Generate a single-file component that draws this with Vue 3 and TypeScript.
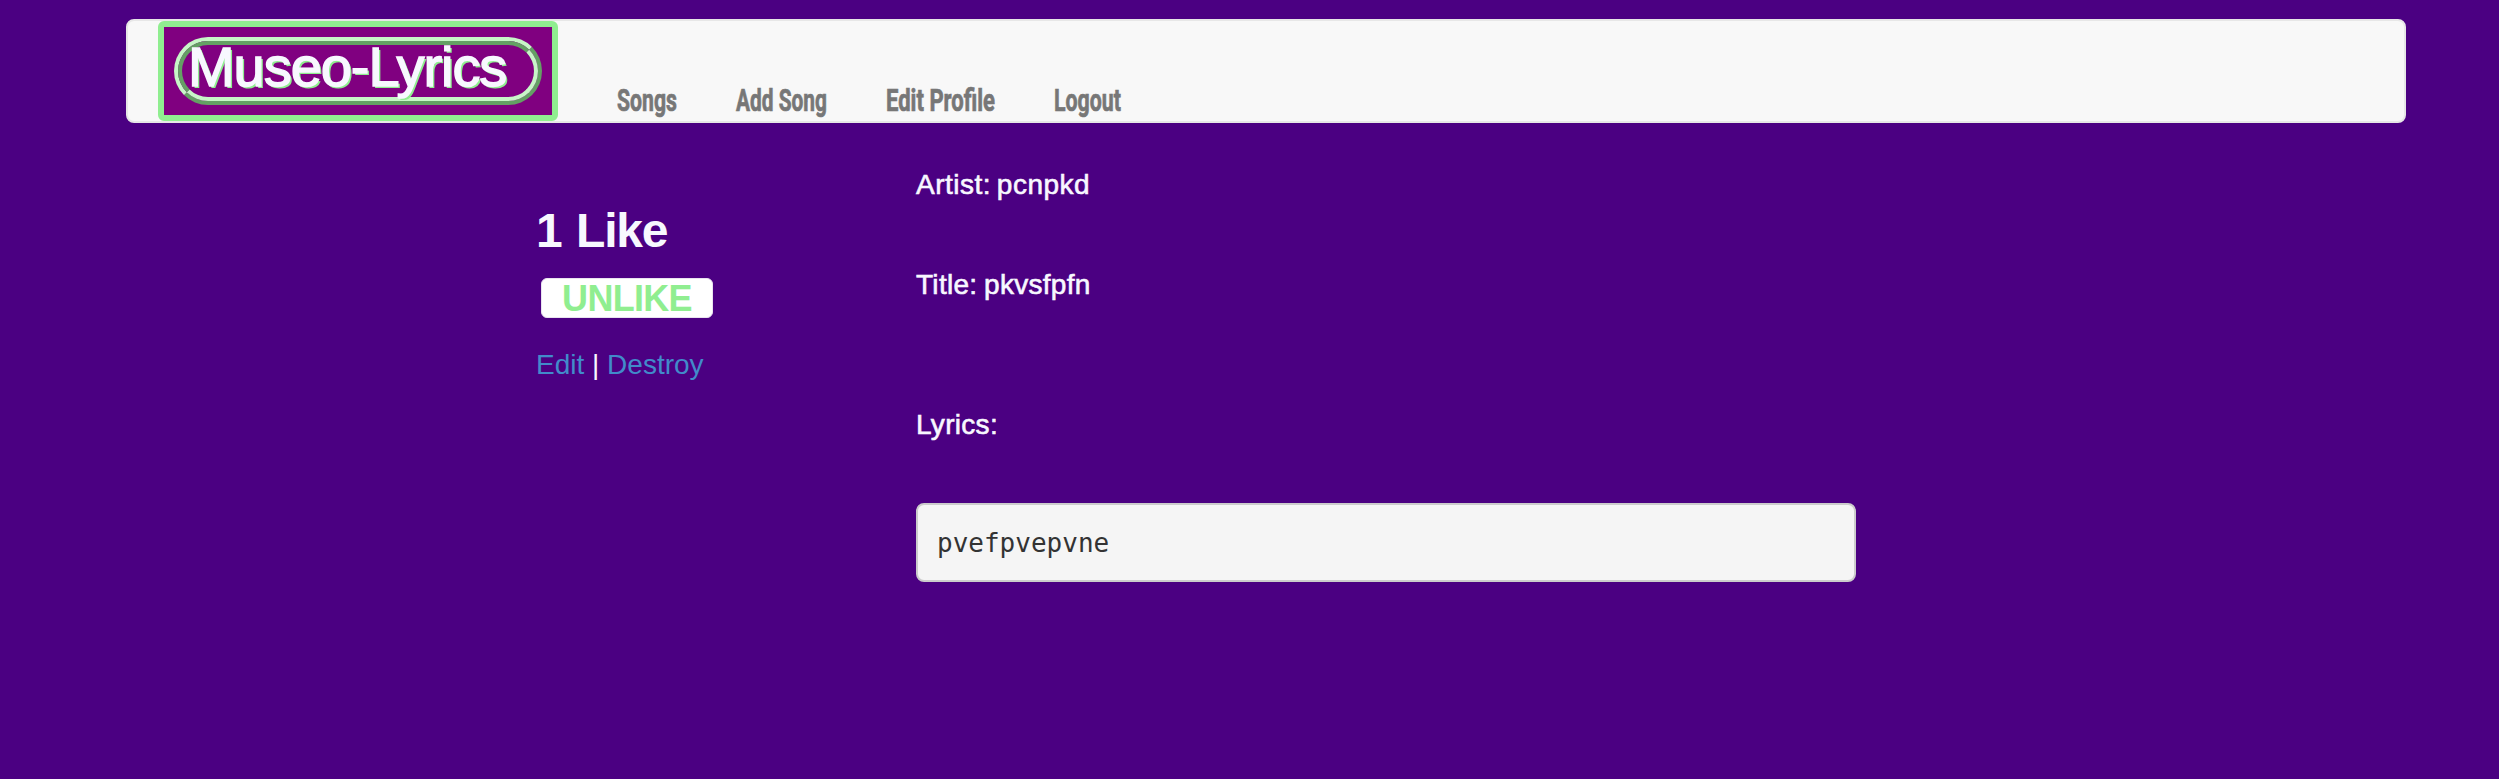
<script setup lang="ts">
interface NavLink {
  label: string
  width: number
}

const links: NavLink[] = [
  { label: 'Songs', width: 60 },
  { label: 'Add Song', width: 91 },
  { label: 'Edit Profile', width: 109 },
  { label: 'Logout', width: 67 },
]

const song = { artist: 'pcnpkd', title: 'pkvsfpfn', lyrics: 'pvefpvepvne' }
</script>

<template>
  <div class="page">
    <nav class="navbar">
      <a class="brand">
        <span class="ring"><span class="ring-inner"><span class="brand-text">Museo-Lyrics</span></span></span>
      </a>
      <ul class="links">
        <li v-for="l in links" :key="l.label">
          <svg :width="l.width" height="30">
            <text x="0" y="20" :textLength="l.width" lengthAdjust="spacingAndGlyphs">{{ l.label }}</text>
          </svg>
        </li>
      </ul>
    </nav>
    <main class="content">
      <aside class="actions">
        <h2>1 <span>Like</span></h2>
        <button type="button">UNLIKE</button>
        <p><a>Edit</a> | <a>Destroy</a></p>
      </aside>
      <section class="song">
        <p class="field artist">Artist: {{ song.artist }}</p>
        <p class="field title">Title: {{ song.title }}</p>
        <p class="field">Lyrics:</p>
        <pre>{{ song.lyrics }}</pre>
      </section>
    </main>
  </div>
</template>

<style>
html, body { background: #4b0082; }
</style>

<style scoped>
.page {
  box-sizing: border-box;
  width: 2499px;
  height: 779px;
  padding: 19px 93px 0 126px;
  overflow: hidden;
  background: #4b0082;
  color: #f8f8ff;
  font-family: "Liberation Sans", Arial, sans-serif;
}
.navbar {
  box-sizing: border-box;
  display: flex;
  width: 2280px;
  height: 104px;
  padding-left: 30px;
  border: 2px solid #e7e7e7;
  border-radius: 8px;
  background: #f8f8f8;
}
.brand {
  box-sizing: border-box;
  width: 400px;
  height: 100px;
  padding: 10px;
  border: 6px solid #90ee90;
  border-radius: 6px;
  background: #800080;
}
.ring {
  box-sizing: border-box;
  display: block;
  width: 368px;
  height: 68px;
  border: 4px solid;
  border-color: #c7f6c7 #64a064 #64a064 #c7f6c7;
  border-radius: 34px;
}
.ring-inner {
  box-sizing: border-box;
  display: block;
  height: 60px;
  padding-left: 6px;
  border: 4px solid;
  border-color: #64a064 #c7f6c7 #c7f6c7 #64a064;
  border-radius: 30px;
}
.brand-text {
  display: block;
  color: #f8f8ff;
  font-size: 56px;
  line-height: 44px;
  letter-spacing: -1.05px;
  white-space: nowrap;
  -webkit-text-stroke: 1.4px #f8f8ff;
  text-shadow: 2px 2px 0 #90ee90;
}
.links {
  display: flex;
  gap: 59px;
  margin: 70px 0 0 59px;
  padding: 0;
  list-style: none;
}
.links svg {
  display: block;
  height: 30px;
  overflow: visible;
  fill: #777;
  font: 700 30.5px Roboto, sans-serif;
  stroke: #777;
  stroke-width: 0.7px;
}
.content {
  display: flex;
  padding: 41px 0 0 410px;
}
.actions { width: 380px; }
h2 {
  margin: 40px 0 0;
  font-size: 48px;
  line-height: 54px;
}
h2 span { letter-spacing: -1.2px; }
button {
  box-sizing: border-box;
  display: block;
  width: 172px;
  height: 40px;
  margin: 20px 0 0 5px;
  padding: 2px 0 0;
  border: 1px solid #e9e2f0;
  border-radius: 6px;
  background: #fff;
  color: #90ee90;
  font: 700 36px/36px "Liberation Sans", Arial, sans-serif;
  letter-spacing: -0.7px;
}
.actions p {
  margin: 31px 0 0;
  font-size: 28px;
  line-height: 32px;
}
.actions a { color: #428bca; }
.song { width: 940px; }
.field {
  margin: 0;
  height: 32px;
  font-size: 28px;
  line-height: 32px;
  letter-spacing: 0.3px;
  word-spacing: -1.5px;
  -webkit-text-stroke: 0.6px #f8f8ff;
}
.artist {
  margin-top: 5px;
  margin-bottom: 68px;
  letter-spacing: 0.5px;
  word-spacing: -2.5px;
}
.title { margin-bottom: 108px; }
pre {
  box-sizing: border-box;
  height: 79px;
  margin: 62px 0 0;
  padding: 20px 19px 18px;
  border: 2px solid #ccc;
  border-radius: 8px;
  background: #f5f5f5;
  color: #333;
  font: 26px/37px "DejaVu Sans Mono", monospace;
}
</style>
